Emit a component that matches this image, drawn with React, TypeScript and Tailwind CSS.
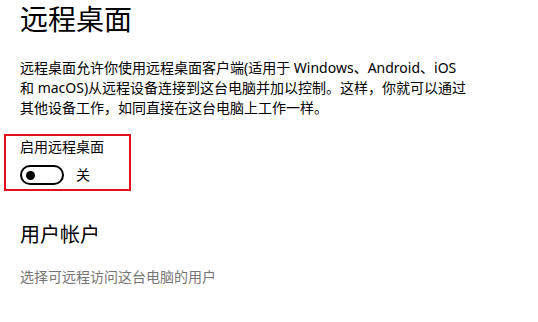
export default function App() {
  return (
    <div
      className="w-[538px] h-[322px] bg-white text-black overflow-hidden pl-5 pr-4"
      style={{ fontFamily: '"Noto Sans", "Noto Sans CJK SC", sans-serif' }}
    >
      {/* Title */}
      <h1 className="text-[28px] leading-[38px] font-normal">远程桌面</h1>

      {/* Description */}
      <p className="mt-5 text-[14px] leading-[20px] whitespace-nowrap">
        远程桌面允许你使用远程桌面客户端(适用于 Windows、Android、iOS
        <br />
        和 macOS)从远程设备连接到这台电脑并加以控制。这样，你就可以通过
        <br />
        其他设备工作，如同直接在这台电脑上工作一样。
      </p>

      {/* Toggle, highlighted */}
      <div className="mt-4 -ml-4 w-[127px] border-2 border-[#e0101e] pl-[14px] pt-[1px] pb-[4px]">
        <div className="text-[14px] leading-[20px]">启用远程桌面</div>
        <div className="mt-2 flex items-center gap-3">
          <div className="w-11 h-5 rounded-full border-2 border-black flex items-center pl-[4px]">
            <div className="w-[9px] h-[9px] rounded-full bg-black" />
          </div>
          <span className="text-[14px] leading-[20px]">关</span>
        </div>
      </div>

      {/* User accounts */}
      <h2 className="mt-[30px] text-[20px] leading-[28px] font-normal">用户帐户</h2>
      <p className="mt-[18px] text-[14px] leading-[20px] text-[#767676]">选择可远程访问这台电脑的用户</p>
    </div>
  );
}
